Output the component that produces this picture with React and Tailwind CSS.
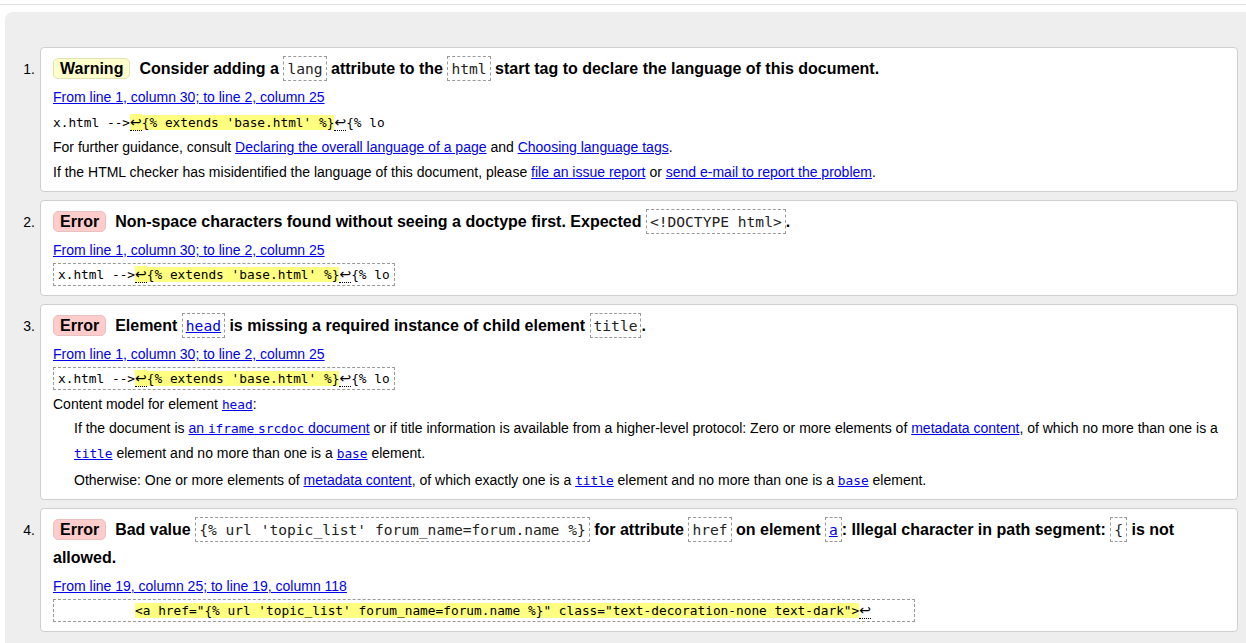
import React from "react";

const SANS = "font-['Liberation_Sans',Arial,sans-serif]";
const MONO = "font-['DejaVu_Sans_Mono',monospace]";

function TCode({ children, link }) {
  return (
    <code
      className={`${MONO} font-normal text-[14.6px] border border-dashed border-[#999] px-[3px] py-[3px] ${
        link ? "text-[#0000ee] underline" : "text-[#222]"
      }`}
    >
      {children}
    </code>
  );
}

function BCode({ children }) {
  return (
    <code className={`${MONO} text-[12.8px] text-[#0000ee] underline`}>{children}</code>
  );
}

function A({ children }) {
  return <span className="text-[#0000ee] underline">{children}</span>;
}

function LF({ hl }) {
  return (
    <span
      className={`font-['DejaVu_Sans',sans-serif] text-[14px] border-b border-dotted border-black ${
        hl ? "bg-[#ffff80]" : ""
      }`}
    >
      ↩
    </span>
  );
}

function Badge({ kind }) {
  const cls =
    kind === "Warning"
      ? "bg-[#ffffcc] border-[#e2e2b0]"
      : "bg-[#ffcccc] border-[#ebc0c0]";
  return (
    <span
      className={`inline-block ${cls} border rounded-[5px] px-[6px] leading-[19px] mr-[9px] font-bold`}
    >
      {kind}
    </span>
  );
}

function Title({ kind, children }) {
  return (
    <p className="font-bold text-[16px] leading-[28px] mb-[2px] text-black">
      <Badge kind={kind} />
      {children}
    </p>
  );
}

function Loc({ children }) {
  return (
    <p className="leading-[25px]">
      <A>{children}</A>
    </p>
  );
}

function Extract1() {
  return (
    <span className={`${MONO} text-[12.8px] whitespace-pre`}>
      {"x.html -->"}
      <span className="bg-[#ffff80]">
        <LF hl />
        {"{% extends 'base.html' %}"}
      </span>
      <LF />
      {"{% lo"}
    </span>
  );
}

function BoxExtract({ children }) {
  return (
    <div
      className={`w-fit border border-dashed border-[#999] px-[4px] leading-[21px] mb-[3px] ${MONO} text-[12.8px] whitespace-pre`}
    >
      {children}
    </div>
  );
}

function Item({ n, children }) {
  return (
    <div className="flex">
      <div className="w-[35px] shrink-0 text-right pr-[5px] pt-[8px] leading-[28px] text-[14px] text-black">
        {n}.
      </div>
      <div className="flex-1 bg-white border border-[#cfcfcf] rounded-[4px] px-[12px] pt-[7px] pb-[6px] text-[14px] text-black">
        {children}
      </div>
    </div>
  );
}

export default function App() {
  return (
    <div className={`${SANS} bg-white min-h-[643px] w-[1246px] overflow-hidden`}>
      <div className="h-[5px] border-b border-[#e0e0e0]" />
      <div className="mt-[7px] ml-[5px] bg-[#eeeeee] rounded-tl-[8px] pt-[35px] pr-[8px] pb-[20px] flex flex-col gap-[8px]">
        <Item n={1}>
          <Title kind="Warning">
            Consider adding a <TCode>lang</TCode> attribute to the <TCode>html</TCode> start tag
            to declare the language of this document.
          </Title>
          <Loc>From line 1, column 30; to line 2, column 25</Loc>
          <p className="leading-[25px]">
            <Extract1 />
          </p>
          <p className="leading-[25px]">
            For further guidance, consult <A>Declaring the overall language of a page</A> and{" "}
            <A>Choosing language tags</A>.
          </p>
          <p className="leading-[25px]">
            If the HTML checker has misidentified the language of this document, please{" "}
            <A>file an issue report</A> or <A>send e-mail to report the problem</A>.
          </p>
        </Item>

        <Item n={2}>
          <Title kind="Error">
            Non-space characters found without seeing a doctype first. Expected{" "}
            <TCode>{"<!DOCTYPE html>"}</TCode>.
          </Title>
          <Loc>From line 1, column 30; to line 2, column 25</Loc>
          <BoxExtract>
            <Extract1 />
          </BoxExtract>
        </Item>

        <Item n={3}>
          <Title kind="Error">
            Element <TCode link>head</TCode> is missing a required instance of child element{" "}
            <TCode>title</TCode>.
          </Title>
          <Loc>From line 1, column 30; to line 2, column 25</Loc>
          <BoxExtract>
            <Extract1 />
          </BoxExtract>
          <p className="leading-[22px]">
            Content model for element <BCode>head</BCode>:
          </p>
          <p className="leading-[25px] pl-[21px]">
            If the document is{" "}
            <A>
              an <BCode>iframe</BCode> <BCode>srcdoc</BCode> document
            </A>{" "}
            or if title information is available from a higher-level protocol: Zero or more
            elements of <A>metadata content</A>, of which no more than one is a{" "}
            <BCode>title</BCode> element and no more than one is a <BCode>base</BCode> element.
          </p>
          <p className="leading-[25px] pl-[21px] mt-[2px]">
            Otherwise: One or more elements of <A>metadata content</A>, of which exactly one is a{" "}
            <BCode>title</BCode> element and no more than one is a <BCode>base</BCode> element.
          </p>
        </Item>

        <Item n={4}>
          <Title kind="Error">
            Bad value <TCode>{"{% url 'topic_list' forum_name=forum.name %}"}</TCode> for
            attribute <TCode>href</TCode> on element <TCode link>a</TCode>: Illegal character in
            path segment: <TCode>{"{"}</TCode> is not allowed.
          </Title>
          <Loc>From line 19, column 25; to line 19, column 118</Loc>
          <BoxExtract>
            {"          "}
            <span className="bg-[#ffff80]">
              {"<a href=\"{% url 'topic_list' forum_name=forum.name %}\" class=\"text-decoration-none text-dark\">"}
            </span>
            <LF />
            {"     "}
          </BoxExtract>
        </Item>
      </div>
    </div>
  );
}
